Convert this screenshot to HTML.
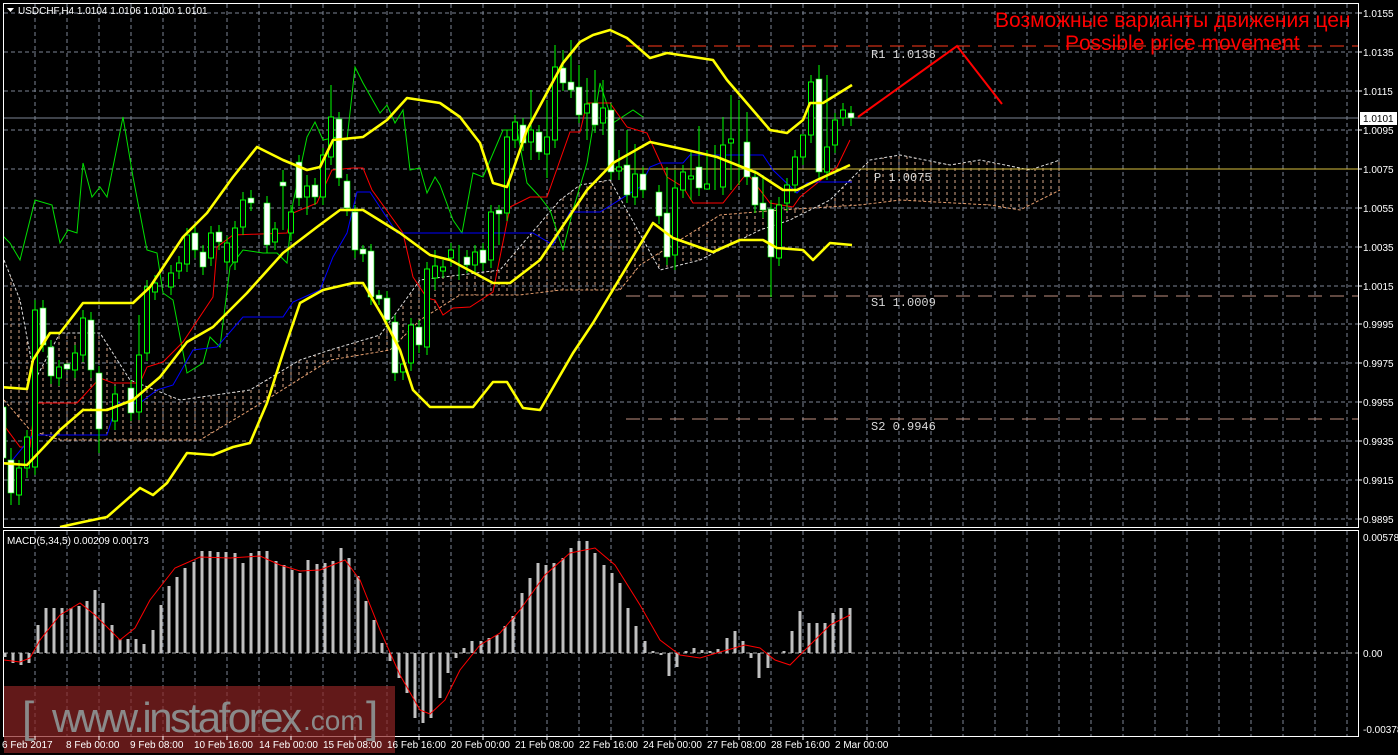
<!DOCTYPE html>
<html><head><meta charset="utf-8"><style>
html,body{margin:0;padding:0;background:#000;overflow:hidden;}
body{width:1398px;height:755px;overflow:hidden;position:relative;font-family:"Liberation Sans",sans-serif;}
svg{position:absolute;left:0;top:0;display:block;}
</style></head><body>
<svg width="1398" height="755" viewBox="0 0 1398 755" xmlns="http://www.w3.org/2000/svg">
<defs>
<pattern id="hatch" width="8" height="6" patternUnits="userSpaceOnUse">
<line x1="3" y1="0" x2="3" y2="3" stroke="#d9a98a" stroke-width="1"/>
</pattern>
<clipPath id="mainclip"><rect x="4" y="4" width="1354" height="523"/></clipPath>
</defs>
<rect width="1398" height="755" fill="#000"/>
<g stroke="#7c8594" stroke-width="1" stroke-dasharray="4,3" fill="none">
<path d="M35 4V527M67 4V527M99 4V527M131 4V527M163 4V527M195 4V527M227 4V527M259 4V527M291 4V527M323 4V527M355 4V527M387 4V527M419 4V527M451 4V527M483 4V527M515 4V527M547 4V527M579 4V527M611 4V527M643 4V527M675 4V527M707 4V527M739 4V527M771 4V527M803 4V527M835 4V527M867 4V527M899 4V527M931 4V527M963 4V527M995 4V527M1027 4V527M1059 4V527M1091 4V527M1123 4V527M1155 4V527M1187 4V527M1219 4V527M1251 4V527M1283 4V527M1315 4V527M1347 4V527"/>
<path d="M4 13H1358M4 52H1358M4 91H1358M4 130H1358M4 169H1358M4 208H1358M4 247H1358M4 286H1358M4 324H1358M4 363H1358M4 402H1358M4 441H1358M4 480H1358M4 519H1358"/>
<path d="M35 531V736M67 531V736M99 531V736M131 531V736M163 531V736M195 531V736M227 531V736M259 531V736M291 531V736M323 531V736M355 531V736M387 531V736M419 531V736M451 531V736M483 531V736M515 531V736M547 531V736M579 531V736M611 531V736M643 531V736M675 531V736M707 531V736M739 531V736M771 531V736M803 531V736M835 531V736M867 531V736M899 531V736M931 531V736M963 531V736M995 531V736M1027 531V736M1059 531V736M1091 531V736M1123 531V736M1155 531V736M1187 531V736M1219 531V736M1251 531V736M1283 531V736M1315 531V736M1347 531V736"/>
<path d="M4 653H1358" stroke="#aaa"/>
</g>
<g clip-path="url(#mainclip)">
<polygon fill="url(#hatch)" points="4,260 20,300 35,380 60,333 100,333 130,380 180,400 250,390 300,360 330,350 380,335 420,280 500,270 560,200 580,185 610,180 660,270 700,260 760,230 790,220 830,200 870,160 900,155 950,165 980,160 1030,170 1060,160 1060,190 1020,210 990,205 900,200 860,205 780,210 720,215 640,265 620,290 560,290 520,295 460,295 420,320 390,350 330,360 250,410 200,440 130,440 60,440 30,430 4,400"/>
<polyline fill="none" stroke="#e8a070" stroke-dasharray="3,2" points="4,400 30,430 60,440 130,440 200,440 250,410 330,360 390,350 420,320 460,295 520,295 560,290 620,290 640,265 720,215 780,210 860,205 900,200 990,205 1020,210 1060,190"/>
<polyline fill="none" stroke="#ddd" stroke-dasharray="3,2" points="4,260 20,300 35,380 60,333 100,333 130,380 180,400 250,390 300,360 330,350 380,335 420,280 500,270 560,200 580,185 610,180 660,270 700,260 760,230 790,220 830,200 870,160 900,155 950,165 980,160 1030,170 1060,160"/>
<line x1="4" y1="118" x2="1358" y2="118" stroke="#7c8594"/>
<line x1="600" y1="169" x2="1358" y2="169" stroke="#d8c040"/>
<line x1="626" y1="46" x2="1358" y2="46" stroke="#ff3a1a" stroke-dasharray="14,8"/>
<line x1="626" y1="296" x2="1358" y2="296" stroke="#c09080" stroke-dasharray="14,8"/>
<line x1="626" y1="419" x2="1358" y2="419" stroke="#c09080" stroke-dasharray="14,8"/>
<polyline fill="none" stroke="#00e000" stroke-width="1" points="0,233 10,243 20,260 35,200 52,205 60,243 68,230 77,233 83,163 92,197 100,187 107,197 123,117 133,177 147,250 157,253 163,293 173,300 187,373 203,363 210,337 220,347 230,267 243,250 263,253 277,253 287,263 293,203 307,137 315,122 323,140 337,137 347,140 355,67 363,83 380,113 387,105 395,123 403,110 410,170 420,168 427,193 435,177 440,185 453,220 462,233 473,173 483,177 503,130 517,130 527,183 540,197 550,210 563,250 573,210 587,163 600,83 613,123 633,110 643,117"/>
<polyline fill="none" stroke="#ff0000" points="0,420 20,447 30,447 35,403 77,403 100,378 113,383 140,383 147,367 163,362 183,342 213,297 217,247 233,235 287,233 293,213 317,203 332,170 353,168 363,168 372,190 403,233 413,277 427,298 435,300 443,315 453,308 470,307 493,292 510,207 530,197 547,197 570,132 580,132 587,103 610,103 627,127 647,133 667,177 683,187 693,203 723,203 747,173 770,203 793,207 800,197 837,167 850,140"/>
<polyline fill="none" stroke="#0000ff" points="10,463 33,435 107,435 117,403 140,403 157,390 173,385 193,350 217,347 243,317 283,317 293,302 320,290 333,257 347,233 357,192 370,192 397,233 440,233 533,233 553,245 570,212 600,212 640,187 650,167 660,163 683,163 690,155 763,155 773,170 797,193 807,183 817,182 852,182"/>
<path stroke="#00ff00" stroke-width="1" fill="none" d="M3 400V465M11 448V505M19 460V505M27 430V478M35 300V475M43 300V352M51 340V384M59 360V386M75 345V378M83 310V362M91 312V378M99 366V453M115 386V430M131 380V421M139 315V420M147 280V361M155 275V300M171 265V295M179 256V279M187 228V272M195 226V258M203 245V275M211 226V266M219 225V250M227 236V270M235 221V270M243 192V235M251 190V211M267 196V253M275 222V250M283 170V230M291 205V241M299 155V206M307 175V215M315 178V205M323 148V205M331 85V165M339 112V186M347 174V216M355 205V258M363 245V262M371 244V305M379 290V305M387 291V328M395 315V381M403 357V380M411 318V371M419 320V353M427 262V355M435 250V290M443 260V278M451 243V266M459 245V280M467 250V273M475 245V273M483 243V271M491 205V268M499 205V245M507 130V221M515 115V148M523 118V151M531 90V160M539 125V160M547 100V178M555 45V148M563 50V91M571 40V98M579 65V123M587 78V140M595 70V133M603 80V135M611 103V180M619 150V180M627 130V203M635 144V205M643 167V198M659 185V224M667 167V265M675 170V270M683 165V198M691 150V200M699 126V196M707 150V184M715 145V190M723 117V195M731 95V190M739 100V185M747 112V185M755 170V213M763 175V218M771 200V297M779 197V266M787 178V211M795 150V193M803 135V165M811 75V143M819 65V180M827 75V180M835 113V153M843 103V126M851 106V126"/>
<g fill="#000" stroke="#00ff00">
<rect x="16.5" y="468" width="5" height="27"/><rect x="24.5" y="437" width="5" height="31"/><rect x="32.5" y="310" width="5" height="157"/><rect x="56.5" y="367" width="5" height="11"/><rect x="72.5" y="353" width="5" height="17"/><rect x="80.5" y="318" width="5" height="37"/><rect x="112.5" y="394" width="5" height="27"/><rect x="136.5" y="355" width="5" height="57"/><rect x="144.5" y="287" width="5" height="66"/><rect x="152.5" y="283" width="5" height="9"/><rect x="168.5" y="273" width="5" height="14"/><rect x="176.5" y="263" width="5" height="8"/><rect x="184.5" y="235" width="5" height="29"/><rect x="208.5" y="233" width="5" height="25"/><rect x="224.5" y="243" width="5" height="19"/><rect x="232.5" y="228" width="5" height="34"/><rect x="240.5" y="200" width="5" height="27"/><rect x="272.5" y="229" width="5" height="13"/><rect x="288.5" y="212" width="5" height="21"/><rect x="304.5" y="186" width="5" height="11"/><rect x="320.5" y="155" width="5" height="42"/><rect x="328.5" y="117" width="5" height="40"/><rect x="400.5" y="364" width="5" height="8"/><rect x="408.5" y="325" width="5" height="38"/><rect x="424.5" y="269" width="5" height="78"/><rect x="432.5" y="266" width="5" height="12"/><rect x="440.5" y="267" width="5" height="4"/><rect x="448.5" y="250" width="5" height="8"/><rect x="472.5" y="252" width="5" height="13"/><rect x="488.5" y="212" width="5" height="48"/><rect x="504.5" y="137" width="5" height="76"/><rect x="512.5" y="122" width="5" height="18"/><rect x="528.5" y="130" width="5" height="12"/><rect x="544.5" y="137" width="5" height="17"/><rect x="552.5" y="67" width="5" height="73"/><rect x="584.5" y="104" width="5" height="9"/><rect x="600.5" y="108" width="5" height="15"/><rect x="616.5" y="167" width="5" height="4"/><rect x="632.5" y="174" width="5" height="23"/><rect x="672.5" y="188" width="5" height="67"/><rect x="680.5" y="172" width="5" height="18"/><rect x="688.5" y="176" width="5" height="3"/><rect x="704.5" y="184" width="5" height="5"/><rect x="720.5" y="145" width="5" height="42"/><rect x="728.5" y="139" width="5" height="4"/><rect x="776.5" y="205" width="5" height="53"/><rect x="784.5" y="185" width="5" height="18"/><rect x="792.5" y="157" width="5" height="28"/><rect x="800.5" y="135" width="5" height="22"/><rect x="808.5" y="82" width="5" height="53"/><rect x="824.5" y="147" width="5" height="25"/><rect x="832.5" y="120" width="5" height="25"/><rect x="840.5" y="110" width="5" height="8"/>
</g>
<g fill="#fff" stroke="#00ff00" stroke-width="0.6">
<rect x="0" y="407" width="6" height="51"/><rect x="8" y="460" width="6" height="33"/><rect x="40" y="308" width="6" height="37"/><rect x="48" y="347" width="6" height="29"/><rect x="64" y="364" width="6" height="5"/><rect x="88" y="320" width="6" height="50"/><rect x="96" y="373" width="6" height="56"/><rect x="128" y="388" width="6" height="25"/><rect x="192" y="233" width="6" height="17"/><rect x="200" y="252" width="6" height="15"/><rect x="216" y="232" width="6" height="10"/><rect x="248" y="198" width="6" height="5"/><rect x="264" y="203" width="6" height="42"/><rect x="280" y="182" width="6" height="4"/><rect x="296" y="162" width="6" height="36"/><rect x="312" y="185" width="6" height="12"/><rect x="336" y="119" width="6" height="59"/><rect x="344" y="181" width="6" height="27"/><rect x="352" y="212" width="6" height="38"/><rect x="360" y="249" width="6" height="5"/><rect x="368" y="251" width="6" height="46"/><rect x="376" y="295" width="6" height="4"/><rect x="384" y="298" width="6" height="22"/><rect x="392" y="322" width="6" height="51"/><rect x="416" y="327" width="6" height="18"/><rect x="464" y="257" width="6" height="8"/><rect x="480" y="250" width="6" height="13"/><rect x="496" y="210" width="6" height="4"/><rect x="520" y="125" width="6" height="18"/><rect x="536" y="132" width="6" height="20"/><rect x="560" y="68" width="6" height="15"/><rect x="568" y="82" width="6" height="8"/><rect x="576" y="87" width="6" height="28"/><rect x="592" y="103" width="6" height="22"/><rect x="608" y="110" width="6" height="62"/><rect x="624" y="165" width="6" height="30"/><rect x="640" y="174" width="6" height="16"/><rect x="656" y="192" width="6" height="24"/><rect x="664" y="213" width="6" height="44"/><rect x="696" y="167" width="6" height="21"/><rect x="744" y="142" width="6" height="35"/><rect x="752" y="177" width="6" height="28"/><rect x="760" y="203" width="6" height="7"/><rect x="768" y="209" width="6" height="48"/><rect x="816" y="79" width="6" height="93"/><rect x="848" y="113" width="6" height="5"/>
</g>
<g fill="none" stroke="#ffff00" stroke-width="2.6" stroke-linejoin="round">
<polyline points="0,387 27,389 33,360 50,333 60,333 83,303 133,303 150,287 183,237 207,213 233,177 257,147 283,160 307,170 320,167 333,140 363,137 387,120 407,98 440,103 460,117 480,143 493,183 507,187 513,170 527,130 550,87 563,63 580,42 593,35 610,30 627,38 650,58 667,53 713,60 727,80 770,130 787,133 803,120 810,103 823,103 852,85"/>
<polyline points="0,463 27,465 60,430 83,410 107,410 133,400 160,377 187,342 213,327 247,293 283,253 317,227 340,210 363,210 400,233 430,255 450,260 493,283 510,283 540,260 587,190 613,163 650,142 687,150 717,157 757,173 783,190 797,190 817,180 850,165"/>
<polyline points="60,527 83,522 107,517 140,488 153,495 167,483 187,453 213,455 233,447 250,443 267,403 283,353 300,303 323,290 353,283 363,283 383,317 400,350 413,390 430,407 473,407 493,382 507,382 523,408 540,410 573,353 593,323 653,223 673,238 713,252 740,240 763,240 777,248 803,250 813,260 830,243 852,245"/>
</g>
<polyline points="858,117 957,46 1002,104" fill="none" stroke="#ff0000" stroke-width="2"/>
<g font-family="Liberation Sans, sans-serif" font-size="21" fill="#ff0000">
<text x="995" y="27">Возможные варианты движения цен</text>
<text x="1065" y="50">Possible price movement</text>
</g>
</g>
<g font-family="Liberation Mono, monospace" font-size="12" fill="#d8d8d8">
<text x="871" y="58">R1 1.0138</text>
<text x="874" y="181">P 1.0075</text>
<text x="871" y="306">S1 1.0009</text>
<text x="871" y="430">S2 0.9946</text>
</g>
<rect x="1359" y="4" width="39" height="526" fill="#000"/>
<rect x="3.5" y="3.5" width="1355" height="524" fill="none" stroke="#fff"/>
<rect x="3.5" y="530.5" width="1355" height="206" fill="none" stroke="#fff"/>
<g font-size="10" fill="#fff" font-family="Liberation Sans, sans-serif">
<text x="1363" y="17">1.0155</text><text x="1363" y="56">1.0135</text><text x="1363" y="95">1.0115</text><text x="1363" y="134">1.0095</text><text x="1363" y="173">1.0075</text><text x="1363" y="212">1.0055</text><text x="1363" y="251">1.0035</text><text x="1363" y="290">1.0015</text><text x="1363" y="328">0.9995</text><text x="1363" y="367">0.9975</text><text x="1363" y="406">0.9955</text><text x="1363" y="445">0.9935</text><text x="1363" y="484">0.9915</text><text x="1363" y="523">0.9895</text>
<text x="1363" y="541">0.00578</text><text x="1363" y="657">0.00</text><text x="1363" y="733">-0.00378</text>
</g>
<g stroke="#fff"><path d="M1358 13h4M1358 52h4M1358 91h4M1358 130h4M1358 169h4M1358 208h4M1358 247h4M1358 286h4M1358 324h4M1358 363h4M1358 402h4M1358 441h4M1358 480h4M1358 519h4"/></g>
<rect x="1360" y="112" width="37" height="13" fill="#fff"/>
<text x="1363" y="122" font-size="10" fill="#000" font-family="Liberation Sans, sans-serif">1.0101</text>
<path d="M7 8h7l-3.5 4z" fill="#fff"/>
<text x="18" y="14" font-size="10" fill="#fff" font-family="Liberation Sans, sans-serif">USDCHF,H4  1.0104 1.0106 1.0100 1.0101</text>
<text x="7" y="544" font-size="10" fill="#fff" font-family="Liberation Sans, sans-serif">MACD(5,34,5) 0.00209 0.00173</text>
<g stroke="#c0c0c0" stroke-width="3">
<path d="M5 653v4M13 653v10M21 653v12M29 653v10M38 653v-28M46 653v-45M54 653v-45M62 653v-45M71 653v-45M79 653v-47M87 653v-52M95 653v-63M103 653v-50M112 653v-28M120 653v-14M128 653v-14M136 653v-14M144 653v-9M153 653v-23M161 653v-48M169 653v-67M177 653v-76M185 653v-85M194 653v-91M202 653v-102M210 653v-102M218 653v-101M226 653v-101M235 653v-100M243 653v-90M251 653v-100M259 653v-102M267 653v-102M276 653v-92M284 653v-88M292 653v-83M300 653v-80M308 653v-93M317 653v-89M325 653v-90M333 653v-92M341 653v-105M349 653v-95M358 653v-77M366 653v-52M374 653v-33M382 653v-10M390 653v8M399 653v25M407 653v40M415 653v65M423 653v70M431 653v65M440 653v45M448 653v20M456 653v5M464 653v-5M472 653v-12M481 653v-12M489 653v-15M497 653v-18M505 653v-27M513 653v-37M522 653v-60M530 653v-75M538 653v-90M546 653v-88M554 653v-90M563 653v-95M571 653v-105M579 653v-112M587 653v-112M595 653v-100M604 653v-88M612 653v-80M620 653v-70M628 653v-45M636 653v-27M645 653v-12M653 653v-2M661 653v2M669 653v23M677 653v14M686 653v-2M694 653v-5M702 653v-3M710 653v-2M718 653v-4M727 653v-15M735 653v-22M743 653v-12M751 653v5M759 653v25M768 653v15M776 653v0M784 653v-2M792 653v-22M800 653v-42M809 653v-30M817 653v-30M825 653v-30M833 653v-40M841 653v-45M850 653v-45"/>
</g>
<polyline fill="none" stroke="#ff0000" points="4,660 20,662 30,658 40,640 60,615 80,603 95,615 120,640 135,628 150,600 175,568 200,557 230,558 260,556 280,565 300,571 320,570 345,560 360,580 380,630 400,675 420,710 430,714 445,700 460,670 480,645 500,633 520,610 545,575 570,553 595,548 615,565 640,605 660,640 680,655 700,658 720,652 745,645 760,648 775,660 790,665 805,650 830,625 850,615"/>
<rect x="4" y="686" width="391" height="67" fill="rgba(140,35,35,0.7)"/>
<text x="22" y="732" font-size="44" fill="#8a8a8a" font-family="Liberation Sans, sans-serif">[</text>
<text x="52" y="732" font-size="42" fill="#8a8a8a" font-family="Liberation Sans, sans-serif" textLength="250">www.instaforex</text>
<text x="303" y="730" font-size="28" fill="#8a8a8a" font-family="Liberation Sans, sans-serif">.com</text>
<text x="366" y="732" font-size="44" fill="#8a8a8a" font-family="Liberation Sans, sans-serif">]</text>
<g stroke="#fff"><path d="M35 736v4M99 736v4M163 736v4M227 736v4M291 736v4M355 736v4M419 736v4M483 736v4M547 736v4M611 736v4M675 736v4M739 736v4M803 736v4M867 736v4"/></g>
<g font-size="10" fill="#fff" font-family="Liberation Sans, sans-serif">
<text x="2" y="748">6 Feb 2017</text><text x="66" y="748">8 Feb 00:00</text><text x="130" y="748">9 Feb 08:00</text><text x="194" y="748">10 Feb 16:00</text><text x="259" y="748">14 Feb 00:00</text><text x="323" y="748">15 Feb 08:00</text><text x="387" y="748">16 Feb 16:00</text><text x="451" y="748">20 Feb 00:00</text><text x="515" y="748">21 Feb 08:00</text><text x="579" y="748">22 Feb 16:00</text><text x="643" y="748">24 Feb 00:00</text><text x="707" y="748">27 Feb 08:00</text><text x="771" y="748">28 Feb 16:00</text><text x="835" y="748">2 Mar 00:00</text>
</g>
</svg>
</body></html>
